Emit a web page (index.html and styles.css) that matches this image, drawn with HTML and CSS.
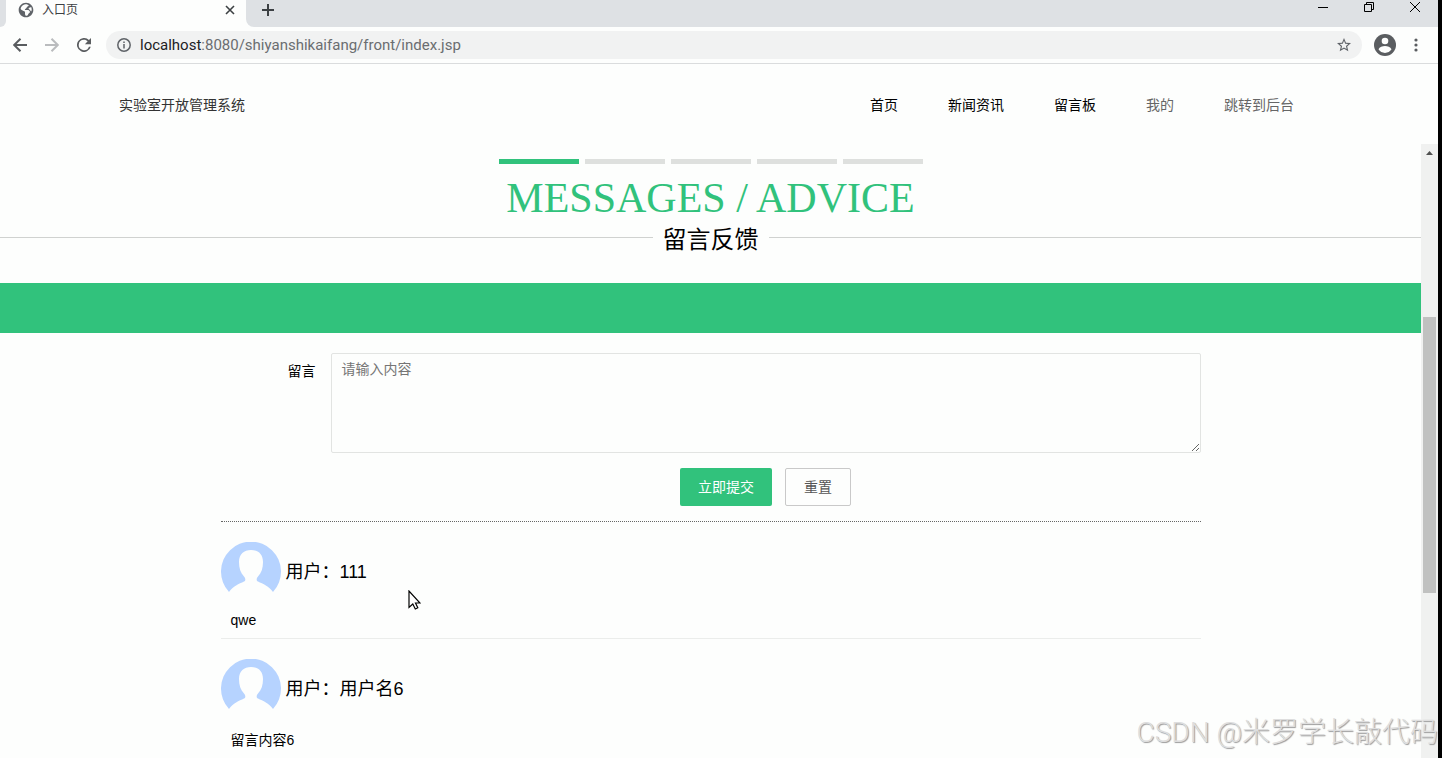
FILE: index.html
```html
<!DOCTYPE html>
<html lang="zh-CN">
<head>
  <meta charset="UTF-8">
  <meta name="viewport" content="width=device-width, initial-scale=1.0">
  <title>入口页</title>
  <link rel="stylesheet" href="styles.css">
</head>
<body>
  <!-- browser window -->
  <div class="tab-strip">
    <div class="tab-edge"></div>
    <div class="tab">
      <svg width="16" height="16" viewBox="0 0 24 24" fill="#5f6368"><path d="M12 1C5.900 1 1 5.900 1 12s4.900 11 11 11 11-4.900 11-11S18.100 1 12 1zM13 3.500c1 .8 2.500.5 3 1.500s-1.500 1.500-2.500 2.500-.5 2-2 2.500-1.500 1.500-.5 2 4.500-.5 6 1 1 3-.5 4-1 3-3 3.500-3-1-3-3 .5-2.500-1-3.500-3.500-1-5.500-3.500c.5-4 4-7 9-7zM16 9.500c1-1.500 3-1.500 4-1.500.7 2 .7 4 .2 6-1.200 0-1.700-2-2.700-2.500s-2-.8-1.500-2z" fill-rule="evenodd"/></svg>
      <span class="tab-title">入口页</span>
      <button class="icon-btn" aria-label="关闭标签页">
        <svg width="10" height="10" viewBox="0 0 10 10" stroke="#3c4043" stroke-width="1.6"><path d="M1 1l8 8M9 1l-8 8"/></svg>
      </button>
    </div>
    <div class="tab-rest">
      <button class="icon-btn" aria-label="新标签页">
        <svg width="12" height="12" viewBox="0 0 12 12" stroke="#3c4043" stroke-width="2"><path d="M6 0v12M0 6h12"/></svg>
      </button>
      <div class="window-btns">
        <button class="icon-btn" aria-label="最小化">
          <svg width="10" height="10" viewBox="0 0 10 10" stroke="#000"><path d="M0 5.500h10"/></svg>
        </button>
        <button class="icon-btn" aria-label="还原">
          <svg width="10" height="10" viewBox="0 0 10 10" fill="none" stroke="#000"><path d="M.5 2.500h7v7h-7zM2.500 2.500v-2h7v7h-2"/></svg>
        </button>
        <button class="icon-btn" aria-label="关闭">
          <svg width="10" height="10" viewBox="0 0 10 10" stroke="#000"><path d="M0 0l10 10M10 0L0 10"/></svg>
        </button>
      </div>
    </div>
  </div>

  <div class="toolbar">
    <button class="icon-btn" aria-label="后退">
      <svg width="14" height="14" viewBox="0 0 14 14" fill="none" stroke="#5a5d60" stroke-width="2"><path d="M14 7H1.500M7.500.7L1.200 7l6.300 6.300"/></svg>
    </button>
    <button class="icon-btn" aria-label="前进">
      <svg width="14" height="14" viewBox="0 0 14 14" fill="none" stroke="#babcbe" stroke-width="2"><path d="M0 7h12.500M6.500.7L12.800 7l-6.300 6.300"/></svg>
    </button>
    <button class="icon-btn" aria-label="重新加载">
      <svg width="14" height="14" viewBox="0 0 16 16" fill="#5a5d60"><path d="M13.650 2.350A8 8 0 1 0 15.730 10h-2.080A6 6 0 1 1 8 2c1.660 0 3.140.69 4.220 1.780L9 7h7V0z"/></svg>
    </button>
    <div class="address">
      <svg width="14" height="14" viewBox="0 0 14 14" fill="none" stroke="#5f6368" stroke-width="1.500"><circle cx="7" cy="7" r="6.200"/><path d="M7 6v4.500M7 3.500V5"/></svg>
      <div class="url"><span>localhost</span>:8080/shiyanshikaifang/front/index.jsp</div>
      <button class="icon-btn" aria-label="收藏">
        <svg width="14" height="14" viewBox="0 0 20 20" fill="#5f6368"><path d="M20 7.240l-7.190-.62L10 0 7.190 6.630 0 7.240l5.460 4.730L3.820 19 10 15.270 16.180 19l-1.630-7.030L20 7.240zM10 13.400l-3.760 2.270 1-4.280-3.320-2.880 4.380-.38L10 4.100l1.710 4.040 4.380.38-3.320 2.880 1 4.280L10 13.400z"/></svg>
      </button>
    </div>
    <button class="icon-btn" aria-label="用户">
      <svg width="22" height="22" viewBox="0 0 22 22"><circle cx="11" cy="11" r="11" fill="#5a5d60"/><circle cx="11" cy="7" r="3.300" fill="#fdfefd"/><path d="M4.500 15.300c1-2.100 4-3.200 6.500-3.200s5.500 1.100 6.500 3.200c-1.400 2.200-3.800 3.600-6.500 3.600s-5.100-1.400-6.500-3.600z" fill="#fdfefd"/></svg>
    </button>
    <button class="icon-btn" aria-label="菜单">
      <svg width="4" height="14" viewBox="0 0 4 14" fill="#5a5d60"><circle cx="2" cy="2" r="1.600"/><circle cx="2" cy="7" r="1.600"/><circle cx="2" cy="12" r="1.600"/></svg>
    </button>
  </div>

  <!-- site header -->
  <header class="site-header">
    <div class="site-inner">
      <div class="logo">实验室开放管理系统</div>
      <nav>
        <a href="#">首页</a>
        <a href="#">新闻资讯</a>
        <a href="#">留言板</a>
        <a href="#" class="muted">我的</a>
        <a href="#" class="muted">跳转到后台</a>
      </nav>
    </div>
  </header>

  <div class="frame">
    <main>
      <div class="steps">
        <i class="active"></i><i></i><i></i><i></i><i></i>
      </div>
      <h1>MESSAGES / ADVICE</h1>
      <h2><span>留言反馈</span></h2>
      <div class="band"></div>

      <div class="container">
        <form>
          <div class="form-row">
            <label for="content">留言</label>
            <textarea id="content" placeholder="请输入内容"></textarea>
          </div>
          <div class="form-btns">
            <button type="button" class="btn btn-primary">立即提交</button>
            <button type="reset" class="btn">重置</button>
          </div>
        </form>

        <div class="message">
          <div class="user">
            <svg class="avatar" viewBox="0 0 60 60"><path d="M8 50A30 30 0 1 1 52 50C48 44 42 42 37 39.500C35 38.500 35.500 36 37 34.500C40.500 31 42 26 42 20C42 12 37 8 30 8S18 12 18 20C18 26 19.500 31 23 34.500C24.500 36 25 38.500 23 39.500C18 42 12 44 8 50Z"/></svg>
            <span>用户：111</span>
          </div>
          <p>qwe</p>
        </div>
        <div class="message">
          <div class="user">
            <svg class="avatar" viewBox="0 0 60 60"><path d="M8 50A30 30 0 1 1 52 50C48 44 42 42 37 39.500C35 38.500 35.500 36 37 34.500C40.500 31 42 26 42 20C42 12 37 8 30 8S18 12 18 20C18 26 19.500 31 23 34.500C24.500 36 25 38.500 23 39.500C18 42 12 44 8 50Z"/></svg>
            <span>用户：用户名6</span>
          </div>
          <p>留言内容6</p>
        </div>
      </div>
    </main>
    <div class="scrollbar">
      <svg width="17" height="17" viewBox="0 0 17 17" fill="#505050"><path d="M5 11l3.500-4L12 11z"/></svg>
      <div class="thumb"></div>
    </div>
  </div>

  <svg class="cursor" width="13" height="20" viewBox="0 0 13 20" fill="#fff" stroke="#000" stroke-width="1.200"><path d="M1 1v16.500l3.800-3.500 2.500 5 2.500-1.200-2.300-4.800H12z"/></svg>
  <div class="watermark">CSDN @米罗学长敲代码</div>
</body>
</html>
```
FILE: styles.css
```css
* {
  box-sizing: border-box;
}
body {
  margin: 0;
  height: 100vh;
  display: flex;
  flex-direction: column;
  position: relative;
  overflow: hidden;
  border-right: 4px solid #000;
  background: #fdfefd;
  color: #000;
  font-family: "Liberation Sans", "Noto Sans CJK SC", sans-serif;
  font-size: 14px;
}
svg {
  display: block;
  flex: none;
}
a {
  color: inherit;
  text-decoration: none;
}
button {
  font: inherit;
  cursor: pointer;
}
.icon-btn {
  display: flex;
  padding: 0;
  border: none;
  background: none;
}

/* browser window */
.tab-strip {
  display: flex;
  flex: none;
  height: 27px;
}
.tab-edge {
  width: 6px;
  background: #dee1e4;
  border-bottom-right-radius: 6px;
}
.tab {
  display: flex;
  align-items: center;
  width: 240px;
  padding: 0 11px 8px 12px;
}
.tab-title {
  flex: 1;
  margin-left: 8px;
  font-size: 12px;
  line-height: 18px;
  color: #3c4043;
}
.tab-rest {
  flex: 1;
  display: flex;
  align-items: center;
  justify-content: space-between;
  padding: 0 18px 7px 16px;
  background: #dee1e4;
  border-bottom-left-radius: 8px;
}
.window-btns {
  display: flex;
  gap: 36px;
  padding-bottom: 6px;
}
.toolbar {
  display: flex;
  flex: none;
  align-items: center;
  gap: 18px;
  height: 37px;
  padding: 0 20px 0 13px;
  border-bottom: 1px solid #dadcdd;
}
.address {
  flex: 1;
  display: flex;
  align-items: center;
  height: 28px;
  margin: 0 -6px 0 -3px;
  padding: 0 11px;
  border-radius: 14px;
  background: #f1f2f2;
}
.url {
  flex: 1;
  margin-left: 9px;
  font-family: Roboto, sans-serif;
  font-size: 15px;
  color: #6a6d70;
}
.url span {
  color: #202124;
}

/* site header */
.site-header {
  flex: none;
}
.site-inner {
  display: flex;
  align-items: center;
  justify-content: space-between;
  max-width: 1200px;
  height: 80px;
  margin: 0 auto;
}
.logo {
  color: #333;
}
nav {
  display: flex;
}
nav a {
  padding: 0 25px;
}
nav .muted {
  color: #666;
}

.frame {
  flex: 1;
  display: flex;
  min-height: 0;
}
main {
  flex: 1;
  overflow: hidden;
}
.steps {
  display: flex;
  justify-content: center;
  gap: 6px;
  padding-top: 15px;
}
.steps i {
  width: 80px;
  height: 5px;
  background: #dee0de;
}
.steps .active {
  background: #31c27c;
}
h1 {
  margin: 10px 0 0;
  font-family: "Liberation Serif", serif;
  font-size: 42px;
  line-height: 48px;
  font-weight: 400;
  text-align: center;
  color: #31c27c;
}
h2 {
  display: flex;
  align-items: center;
  gap: 10px;
  margin: 0;
  font-size: 24px;
  line-height: 24px;
  font-weight: 400;
}
h2 span {
  padding-top: 6px;
}
h2::before,
h2::after {
  content: "";
  flex: 1;
  height: 1px;
  background: #d0d2d0;
}
.band {
  height: 50px;
  margin-top: 31px;
  background: #31c27c;
}
.container {
  max-width: 980px;
  margin: 0 auto;
}
form {
  padding: 20px 0 15px;
  border-bottom: 1px dotted #666;
}
.form-row {
  display: flex;
}
.form-row label {
  width: 110px;
  padding: 8px 15px;
  line-height: 20px;
  text-align: right;
}
.form-row textarea {
  flex: 1;
  height: 100px;
  padding: 5px 10px;
  border: 1px solid #e2e4e2;
  border-radius: 2px;
  background: transparent;
  font: inherit;
  line-height: 20px;
  resize: vertical;
}
.form-row textarea::placeholder {
  color: #757575;
}
.form-btns {
  display: flex;
  justify-content: center;
  gap: 13px;
  margin: 15px 0 0 110px;
}
.btn {
  height: 38px;
  padding: 0 18px 2px;
  border: 1px solid #c9c9c9;
  border-radius: 2px;
  background: transparent;
  color: #555;
}
.btn-primary {
  border: none;
  background: #31c27c;
  color: #fff;
}
.message {
  padding-top: 20px;
  border-bottom: 1px solid #ebedeb;
}
.user {
  display: flex;
  align-items: center;
  gap: 5px;
  font-size: 18px;
}
.user span {
  padding-bottom: 5px;
}
.avatar {
  width: 60px;
  height: 60px;
  fill: #b6d3ff;
}
.message p {
  margin: 10px;
}

.scrollbar {
  width: 17px;
  background: #f0f1f0;
}
.thumb {
  height: 45%;
  margin: 156px 2px 0;
  background: #c0c1c0;
}

/* overlays */
.cursor {
  position: absolute;
  left: 408px;
  top: 590px;
}
.watermark {
  position: absolute;
  right: 0;
  bottom: 5px;
  font-family: Roboto, "Noto Sans CJK SC", sans-serif;
  font-size: 28px;
  line-height: 40px;
  font-weight: 300;
  color: #dedede;
  text-shadow: 1px 1px 1px #999;
}
```
